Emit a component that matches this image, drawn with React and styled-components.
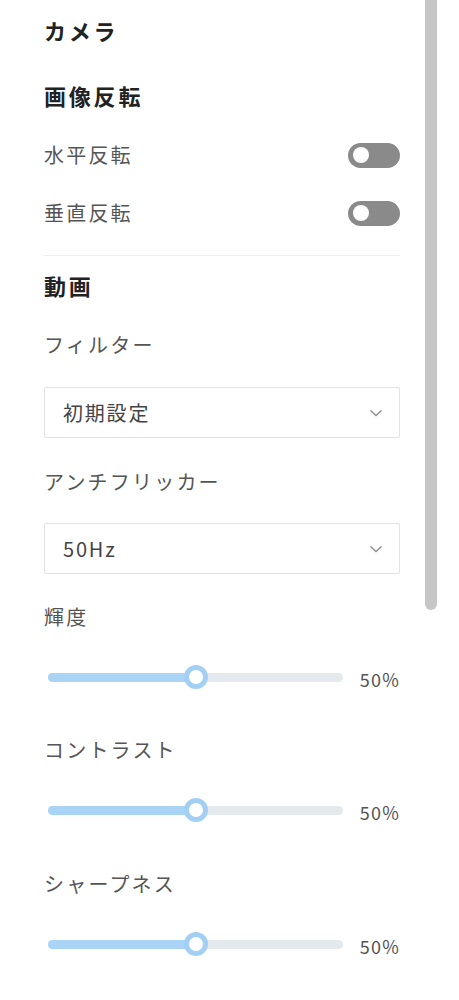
import styled, { createGlobalStyle } from "styled-components";

const GlobalStyle = createGlobalStyle`
  body {
    margin: 0;
    background: #fff;
    font-family: "Noto Sans CJK JP", "Noto Sans", sans-serif;
  }
`;

const sliders = [
  { label: "輝度", value: 50, gap: 23 },
  { label: "コントラスト", value: 50, gap: 33 },
  { label: "シャープネス", value: 50, gap: 34 },
];

export default function App() {
  return (
    <Page>
      <GlobalStyle />
      <Content>
        <Title top={10}>カメラ</Title>
        <Title top={25}>画像反転</Title>
        <ToggleRow top={20}>
          <Label>水平反転</Label>
          <Toggle />
        </ToggleRow>
        <ToggleRow top={18}>
          <Label>垂直反転</Label>
          <Toggle />
        </ToggleRow>
        <Divider />
        <Title top={9}>動画</Title>
        <FieldLabel top={20}>フィルター</FieldLabel>
        <Select top={22}>
          <span>初期設定</span>
          <Chevron />
        </Select>
        <FieldLabel top={24}>アンチフリッカー</FieldLabel>
        <Select top={21}>
          <span>50Hz</span>
          <Chevron />
        </Select>
        {sliders.map((s) => (
          <div key={s.label}>
            <FieldLabel top={s.gap}>{s.label}</FieldLabel>
            <SliderRow>
              <Track>
                <Fill style={{ width: s.value + "%" }} />
                <Thumb style={{ left: s.value + "%" }} />
              </Track>
              <Percent>{s.value}%</Percent>
            </SliderRow>
          </div>
        ))}
      </Content>
      <ScrollBar />
    </Page>
  );
}

function Chevron() {
  return (
    <svg width="14" height="8" viewBox="0 0 14 8" fill="none">
      <path d="M1.5 1.5 L7 6.5 L12.5 1.5" stroke="#8a8a8a" strokeWidth="1.3" />
    </svg>
  );
}

const Page = styled.div`
  display: flex;
  align-items: flex-start;
  padding-left: 44px;
  gap: 25px;
`;

const Content = styled.div`
  width: 356px;
  display: flex;
  flex-direction: column;
`;

const Title = styled.div`
  margin-top: ${(p) => p.top}px;
  height: 40px;
  line-height: 40px;
  font-size: 22px;
  font-weight: 700;
  letter-spacing: 2.8px;
  color: #222;
`;

const ToggleRow = styled.div`
  margin-top: ${(p) => p.top}px;
  height: 40px;
  display: flex;
  align-items: center;
  justify-content: space-between;
`;

const Label = styled.div`
  font-size: 20px;
  letter-spacing: 2.2px;
  color: #555;
  line-height: 40px;
`;

const FieldLabel = styled(Label)`
  margin-top: ${(p) => p.top}px;
  height: 40px;
`;

const Toggle = styled.div`
  width: 52px;
  height: 25px;
  border-radius: 13px;
  background: #8a8a8a;
  position: relative;

  &::after {
    content: "";
    position: absolute;
    left: 5px;
    top: 4.5px;
    width: 16px;
    height: 16px;
    border-radius: 50%;
    background: #fff;
  }
`;

const Divider = styled.div`
  margin-top: 22px;
  height: 1px;
  background: #eeeeee;
`;

const Select = styled.div`
  margin-top: ${(p) => p.top}px;
  box-sizing: border-box;
  height: 51px;
  border: 1px solid #e2e2e2;
  border-radius: 2px;
  padding: 0 16px 0 18px;
  display: flex;
  align-items: center;
  justify-content: space-between;
  font-size: 20px;
  letter-spacing: 1.8px;
  color: #444;
`;

const SliderRow = styled.div`
  margin-top: 20px;
  height: 40px;
  display: flex;
  align-items: center;
  padding-left: 4px;
`;

const Track = styled.div`
  position: relative;
  width: 295px;
  height: 9px;
  border-radius: 5px;
  background: #e4e9ee;
`;

const Fill = styled.div`
  height: 100%;
  border-radius: 5px;
  background: #a9d4f6;
`;

const Thumb = styled.div`
  position: absolute;
  top: 50%;
  width: 24px;
  height: 24px;
  box-sizing: border-box;
  border: 5px solid #a3cff4;
  border-radius: 50%;
  background: #fff;
  transform: translate(-50%, -50%);
`;

const Percent = styled.div`
  margin-left: auto;
  margin-top: 4px;
  font-size: 18px;
  letter-spacing: 1.2px;
  color: #555;
`;

const ScrollBar = styled.div`
  width: 12px;
  height: 610px;
  background: #c6c6c6;
  border-radius: 0 0 6px 6px;
`;
